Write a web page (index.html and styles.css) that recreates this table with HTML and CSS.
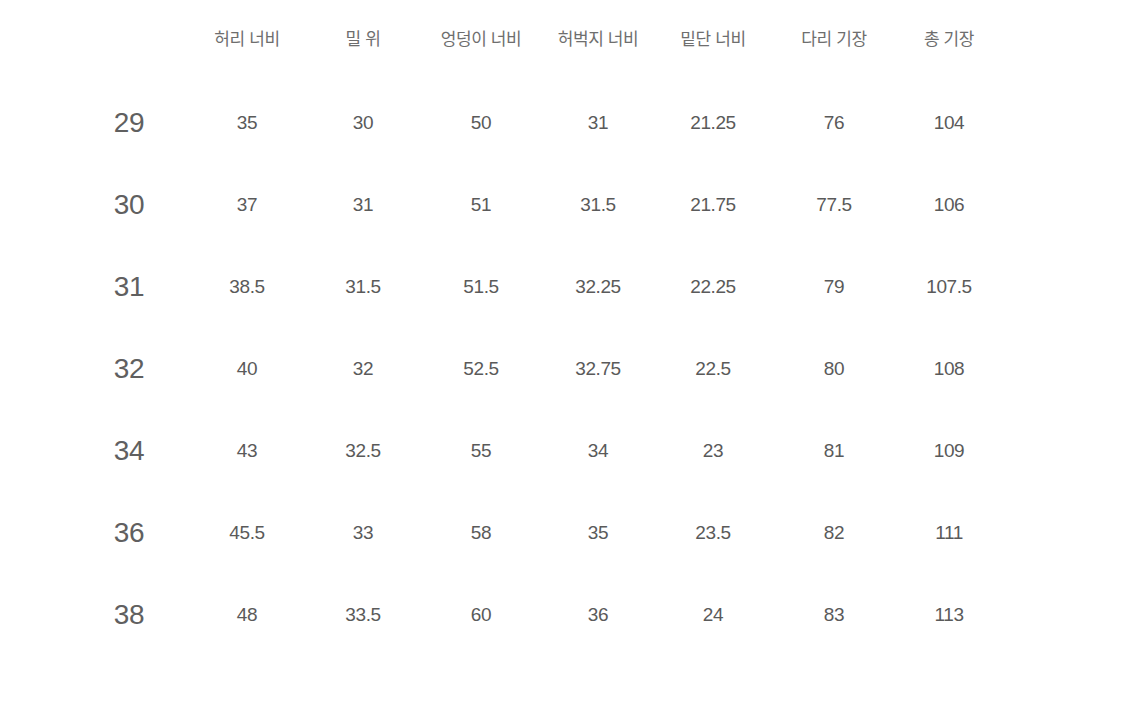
FILE: index.html
```html
<!DOCTYPE html>
<html lang="ko">
<head>
<meta charset="utf-8">
<title>사이즈</title>
<link rel="stylesheet" href="styles.css">
</head>
<body>
<div class="chart">
  <div class="cell head"></div>
  <div class="cell head">허리 너비</div>
  <div class="cell head">밀 위</div>
  <div class="cell head">엉덩이 너비</div>
  <div class="cell head">허벅지 너비</div>
  <div class="cell head">밑단 너비</div>
  <div class="cell head">다리 기장</div>
  <div class="cell head">총 기장</div>

  <div class="cell size">29</div><div class="cell">35</div><div class="cell">30</div><div class="cell">50</div><div class="cell">31</div><div class="cell">21.25</div><div class="cell">76</div><div class="cell">104</div>
  <div class="cell size">30</div><div class="cell">37</div><div class="cell">31</div><div class="cell">51</div><div class="cell">31.5</div><div class="cell">21.75</div><div class="cell">77.5</div><div class="cell">106</div>
  <div class="cell size">31</div><div class="cell">38.5</div><div class="cell">31.5</div><div class="cell">51.5</div><div class="cell">32.25</div><div class="cell">22.25</div><div class="cell">79</div><div class="cell">107.5</div>
  <div class="cell size">32</div><div class="cell">40</div><div class="cell">32</div><div class="cell">52.5</div><div class="cell">32.75</div><div class="cell">22.5</div><div class="cell">80</div><div class="cell">108</div>
  <div class="cell size">34</div><div class="cell">43</div><div class="cell">32.5</div><div class="cell">55</div><div class="cell">34</div><div class="cell">23</div><div class="cell">81</div><div class="cell">109</div>
  <div class="cell size">36</div><div class="cell">45.5</div><div class="cell">33</div><div class="cell">58</div><div class="cell">35</div><div class="cell">23.5</div><div class="cell">82</div><div class="cell">111</div>
  <div class="cell size">38</div><div class="cell">48</div><div class="cell">33.5</div><div class="cell">60</div><div class="cell">36</div><div class="cell">24</div><div class="cell">83</div><div class="cell">113</div>
</div>
</body>
</html>
```

FILE: styles.css
```css
html, body {
  margin: 0;
  padding: 0;
  background: #ffffff;
}

body {
  width: 1125px;
  height: 717px;
  overflow: hidden;
  font-family: "Liberation Sans", Arial, "Noto Sans CJK KR", sans-serif;
  color: #5a5a5a;
}

.chart {
  display: grid;
  grid-template-columns: 118px 118px 114px 122px 112px 118px 124px 106px;
  grid-template-rows: 82px repeat(7, 82px);
  padding-left: 70px;
  align-items: center;
}

.cell {
  text-align: center;
  font-size: 19px;
  line-height: 20px;
  letter-spacing: -0.4px;
  white-space: nowrap;
}

.head {
  font-family: "Noto Sans CJK KR", sans-serif;
  font-size: 17px;
  line-height: 20px;
  color: #6e6e6e;
  letter-spacing: -0.4px;
  padding-bottom: 6px;
}

.size {
  font-size: 28px;
  line-height: 30px;
  color: #606060;
  letter-spacing: -0.2px;
}
```
